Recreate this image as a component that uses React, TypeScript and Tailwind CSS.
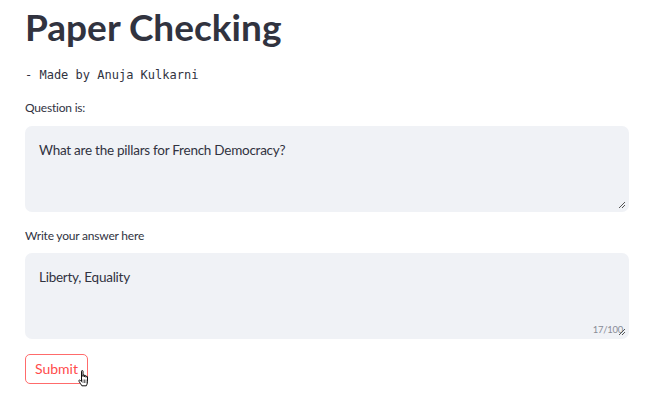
import React from "react";

function ResizeHandle() {
  return (
    <svg width="8" height="8" viewBox="0 0 8 8" className="absolute right-[3px] bottom-[3px]">
      <path d="M7 1 L1 7 M7 4 L4 7" stroke="#555" strokeWidth="1" />
    </svg>
  );
}

function HandCursor() {
  return (
    <svg width="12" height="17" viewBox="0 0 12 17" className="absolute left-[53px] top-[16px]">
      <path
        d="M3.5 1.2 C3.5 0.3 5 0.3 5 1.2 L5 6.5 L5 5.3 C5 4.6 6.5 4.6 6.5 5.3 L6.5 6.8 L6.5 6 C6.5 5.3 8 5.3 8 6 L8 7.3 L8 6.8 C8 6.1 9.5 6.1 9.5 6.8 L9.5 11.8 C9.5 13.6 8.7 14.8 8.3 15.8 L3.9 15.8 C3.1 14.4 1.7 12.6 1 11.3 C0.5 10.3 1.5 9.6 2.2 10.3 L3.5 11.6 Z"
        fill="#fff"
        stroke="#111"
        strokeWidth="1"
        strokeLinejoin="round"
      />
      <path d="M5 9.5 L5 13 M6.5 9.5 L6.5 13 M8 9.5 L8 13" stroke="#111" strokeWidth="0.6" />
    </svg>
  );
}

function Field({ label, gap, children }: { label: string; gap: string; children: React.ReactNode }) {
  return (
    <div className={`flex flex-col ${gap}`}>
      <label className="text-[12px] leading-[18px] tracking-[-0.2px]">{label}</label>
      {children}
    </div>
  );
}

export default function App() {
  return (
    <div className="w-[652px] h-[403px] bg-white overflow-hidden pl-[25px] pr-[23px] flex flex-col gap-[16px] text-[#31333F] [font-family:Lato,'Noto_Sans',sans-serif]">
      <header className="flex flex-col gap-[18px] pt-[5px]">
        <h1 className="text-[37px] leading-[44px] font-bold">Paper Checking</h1>
        <div className="text-[12px] leading-[16px] [font-family:'DejaVu_Sans_Mono',monospace]">- Made by Anuja Kulkarni</div>
      </header>
      <main className="flex flex-col gap-[15px]">
        <Field label="Question is:" gap="gap-[9px]">
          <div className="relative h-[86px] rounded-[7px] bg-[#F0F2F6] pl-[14px] pt-[14px] text-[13.5px] leading-[20px] tracking-[-0.25px]">
            What are the pillars for French Democracy?
            <ResizeHandle />
          </div>
        </Field>
        <Field label="Write your answer here" gap="gap-[8px]">
          <div className="relative h-[86px] rounded-[7px] bg-[#F0F2F6] pl-[14px] pt-[14px] text-[13.5px] leading-[20px] tracking-[-0.25px]">
            Liberty, Equality
            <span className="absolute right-[6px] bottom-[3px] text-[9.5px] leading-[12px] text-[#8a8d97]">17/100</span>
            <ResizeHandle />
          </div>
        </Field>
        <div className="relative flex">
          <button className="h-[30px] w-[63px] rounded-[5px] border border-[#ff6b6b] bg-white text-[14px] text-[#ff4b4b] leading-[20px]">
            Submit
          </button>
          <HandCursor />
        </div>
      </main>
    </div>
  );
}
